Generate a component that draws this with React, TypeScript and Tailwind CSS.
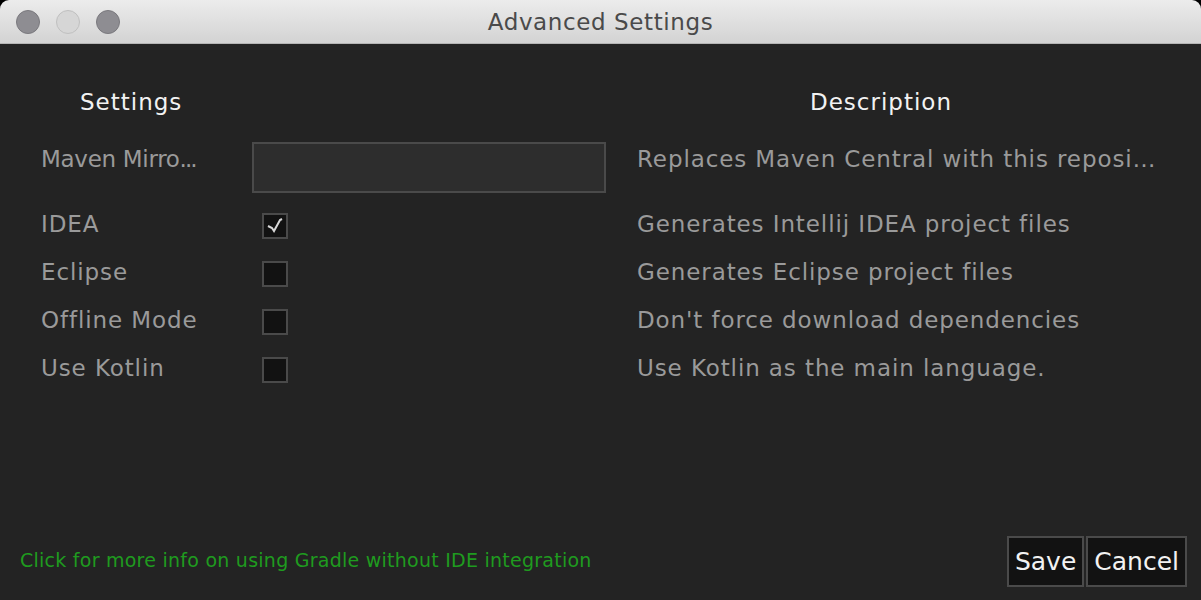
import React from 'react';

const font = { fontFamily: '"DejaVu Sans", "Liberation Sans", sans-serif' };

type Row = { label: string; checked: boolean; desc: string };

const rows: Row[] = [
  { label: 'IDEA', checked: true, desc: 'Generates Intellij IDEA project files' },
  { label: 'Eclipse', checked: false, desc: 'Generates Eclipse project files' },
  { label: 'Offline Mode', checked: false, desc: "Don't force download dependencies" },
  { label: 'Use Kotlin', checked: false, desc: 'Use Kotlin as the main language.' },
];

const Checkbox = ({ checked }: { checked: boolean }) => (
  <div className="w-[26px] h-[26px] border-2 border-[#4a4a4a] bg-[#121212] flex items-center justify-center">
    {checked && (
      <svg width="22" height="22" viewBox="0 0 22 22">
        <path d="M4 11 L8 13 L10 16 L16 5 L18 4" stroke="#d8d8d8" strokeWidth="2" fill="none" strokeLinejoin="miter" />
      </svg>
    )}
  </div>
);

export default function App() {
  return (
    <div className="w-[1201px] h-[600px] bg-black flex flex-col overflow-hidden" style={font}>
      {/* title bar */}
      <div className="h-[44px] rounded-t-[9px] bg-gradient-to-b from-[#ececec] to-[#d3d3d3] border-b border-[#b5b5b5] grid grid-cols-[1fr_auto_1fr] items-center">
        <div className="flex items-center gap-[16px] pl-[16px]">
          <span className="w-[24px] h-[24px] rounded-full bg-[#8e8d92] border border-[#7a797e]" />
          <span className="w-[24px] h-[24px] rounded-full bg-[#d6d6d6] border border-[#c0c0c0]" />
          <span className="w-[24px] h-[24px] rounded-full bg-[#8e8d92] border border-[#7a797e]" />
        </div>
        <div className="text-[23px] tracking-[0.6px] text-[#4a4a4a] leading-none pt-[1px]">Advanced Settings</div>
        <div />
      </div>

      {/* body */}
      <div className="flex-1 bg-[#232323] flex flex-col">
        <div className="flex mt-[45px] h-[26px] items-center text-[23px] tracking-[1px] text-[#f2f2f2] leading-none">
          <div className="pl-[80px] w-[810px]">Settings</div>
          <div>Description</div>
        </div>

        <div className="flex mt-[27px] text-[23px] tracking-[0.9px] text-[#9a9a9a]">
          <div className="pl-[41px] w-[252px] pt-[3px] leading-[28px] tracking-[-0.3px] whitespace-nowrap">
            Maven Mirro<span className="tracking-[-2px]">...</span>
          </div>
          <div className="w-[354px] h-[51px] border-2 border-[#4a4a4a] bg-[#2d2d2d]" />
          <div className="pl-[31px] pt-[3px] leading-[28px]">Replaces Maven Central with this reposi…</div>
        </div>

        <div className="flex flex-col mt-[20px] gap-[22px] text-[23px] tracking-[0.9px] text-[#9a9a9a]">
          {rows.map((r) => (
            <div key={r.label} className="flex items-center h-[26px]">
              <div className="pl-[41px] w-[262px] leading-none -mt-[3px]">{r.label}</div>
              <div className="w-[375px]">
                <Checkbox checked={r.checked} />
              </div>
              <div className="leading-none -mt-[3px]">{r.desc}</div>
            </div>
          ))}
        </div>

        <div className="mt-auto flex items-center justify-between pl-[20px] pr-[14px] pb-[13px]">
          <div className="text-[19px] tracking-[0.25px] text-[#1f9b1f] -mt-[3px]">Click for more info on using Gradle without IDE integration</div>
          <div className="flex gap-[2px]">
            <button className="h-[51px] px-[6px] border-2 border-[#4a4a4a] bg-[#121212] text-[25px] text-[#f2f2f2]" style={font}>Save</button>
            <button className="h-[51px] px-[6px] border-2 border-[#4a4a4a] bg-[#121212] text-[25px] text-[#f2f2f2]" style={font}>Cancel</button>
          </div>
        </div>
      </div>
    </div>
  );
}
